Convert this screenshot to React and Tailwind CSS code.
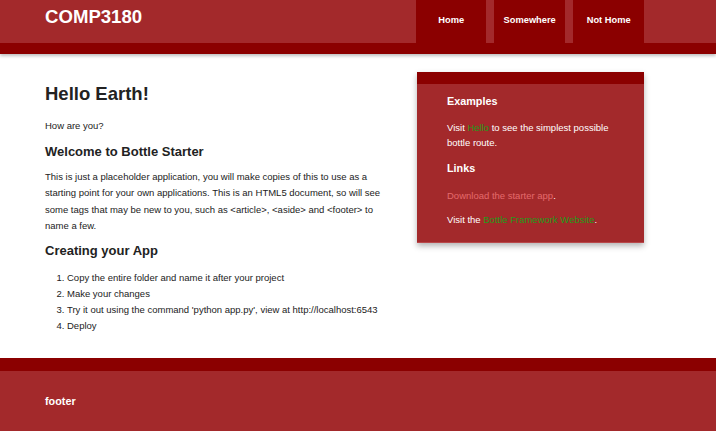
export default function App() {
  return (
    <div className="w-full bg-white font-['Liberation_Sans',Arial,sans-serif] text-[#222]">
      <header className="relative z-10 shadow-[0_2px_3px_rgba(0,0,0,0.25)]">
        <div className="flex h-[43px] bg-[#a3292b] pl-[45px]">
          <div className="pt-[6px] text-[18.6px] font-bold leading-[22px] text-white">COMP3180</div>
          <nav className="ml-[274px] flex gap-[8px]">
            <a className="flex h-[43px] w-[70px] items-center justify-center bg-[#8b0000] pb-[2px] text-[9.3px] font-bold text-white">Home</a>
            <a className="flex h-[43px] w-[71px] items-center justify-center bg-[#8b0000] pb-[2px] text-[9.3px] font-bold text-white">Somewhere</a>
            <a className="flex h-[43px] w-[71px] items-center justify-center bg-[#8b0000] pb-[2px] text-[9.3px] font-bold text-white">Not Home</a>
          </nav>
        </div>
        <div className="h-[11px] bg-[#8b0000]"></div>
      </header>

      <main className="flex h-[304px] pl-[45px]">
        <article className="w-[345px] text-[9.5px]">
          <h1 className="mt-[28px] text-[18.5px] font-bold leading-[24px]">Hello Earth!</h1>
          <p className="mt-[12px] leading-[16px]">How are you?</p>
          <h2 className="mt-[9px] text-[13px] font-bold leading-[18px]">Welcome to Bottle Starter</h2>
          <p className="mt-[8px] leading-[16.4px]">
            This is just a placeholder application, you will make copies of this to use as a starting point for your own applications. This is an HTML5 document, so will see some tags that may be new to you, such as &lt;article&gt;, &lt;aside&gt; and &lt;footer&gt; to name a few.
          </p>
          <h2 className="mt-[7px] text-[13px] font-bold leading-[18px]">Creating your App</h2>
          <ol className="mt-[10px] list-decimal pl-[22px] leading-[16px]">
            <li>Copy the entire folder and name it after your project</li>
            <li>Make your changes</li>
            <li>Try it out using the command 'python app.py', view at http://localhost:6543</li>
            <li>Deploy</li>
          </ol>
        </article>
        <aside className="ml-[27px] mt-[18px] h-[171px] w-[227px] self-start border-b border-[#b8474a] bg-[#a3292b] shadow-[0_3px_6px_rgba(0,0,0,0.3)]">
          <div className="h-[12px] bg-[#8b0000]"></div>
          <div className="px-[30px] text-[9.5px] text-white">
            <h3 className="mt-[10px] text-[10.8px] font-bold leading-[14px]">Examples</h3>
            <p className="mt-[12px] leading-[15px]">
              Visit <a className="text-[#1f9c1a]">Hello</a> to see the simplest possible bottle route.
            </p>
            <h3 className="mt-[11px] text-[10.8px] font-bold leading-[14px]">Links</h3>
            <p className="mt-[13px] leading-[15px]">
              <a className="text-[#e3696b]">Download the starter app</a>.
            </p>
            <p className="mt-[9px] leading-[15px]">
              Visit the <a className="text-[#1f9c1a]">Bottle Framework Website</a>.
            </p>
          </div>
        </aside>
      </main>

      <footer>
        <div className="h-[13px] bg-[#8b0000]"></div>
        <div className="flex h-[60px] items-center bg-[#a3292b] pl-[45px]">
          <span className="text-[10.8px] font-bold text-white">footer</span>
        </div>
      </footer>
      <div className="h-[9px] bg-white"></div>
    </div>
  );
}
